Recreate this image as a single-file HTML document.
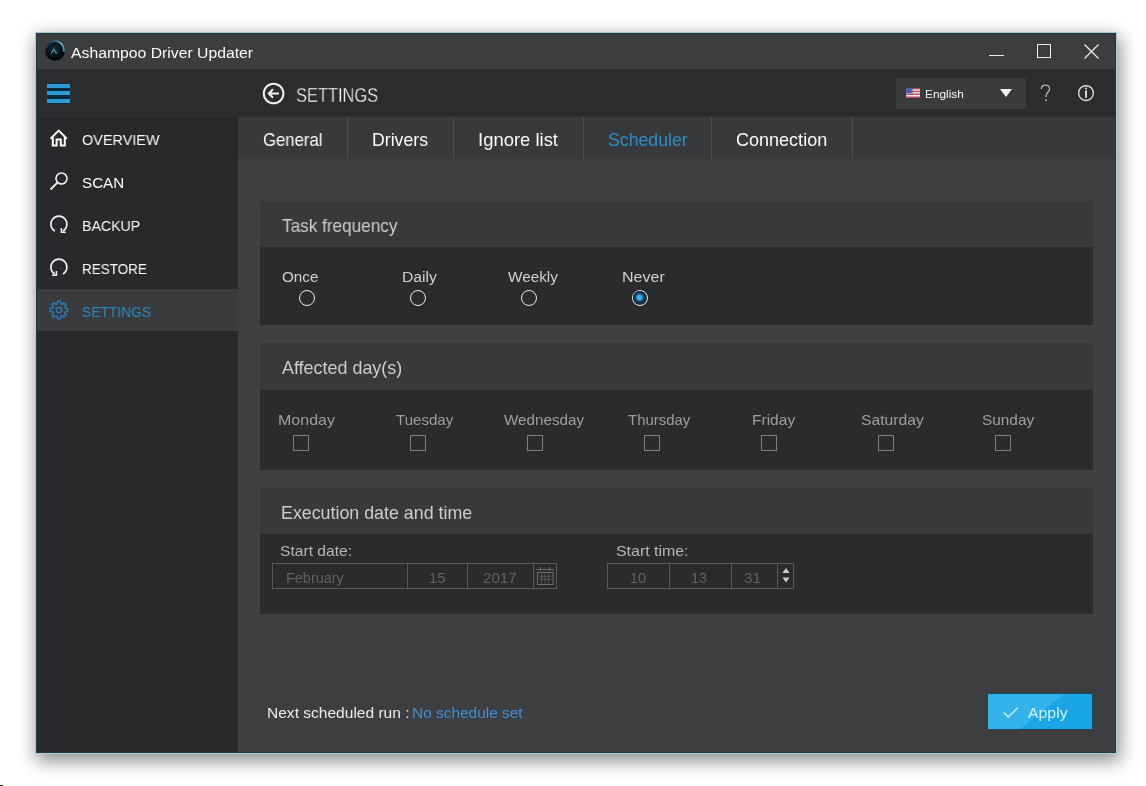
<!DOCTYPE html>
<html><head><meta charset="utf-8">
<style>
*{margin:0;padding:0;box-sizing:border-box}
html,body{width:1146px;height:786px;overflow:hidden;background:#fff;font-family:"Liberation Sans",sans-serif}
.abs{position:absolute}
.t{position:absolute;white-space:pre;line-height:1;transform-origin:0 0;will-change:transform}
#shadow{position:absolute;left:35px;top:32px;width:1082px;height:722px;box-shadow:2px 6px 17px 1px rgba(0,0,0,.45)}
#win{position:absolute;left:35px;top:32px;width:1082px;height:722px;background:#2b2c2e;border:1px solid #a8cdd4}
#title{position:absolute;left:37px;top:34px;width:1078px;height:35px;background:#3c3d3f}
#head{position:absolute;left:37px;top:69px;width:1078px;height:48px;background:#2b2c2e}
#side{position:absolute;left:37px;top:117px;width:201px;height:635px;background:#28292b}
#content{position:absolute;left:238px;top:117px;width:877px;height:635px;background:#3d3e40}
#tabs{position:absolute;left:238px;top:117px;width:877px;height:42px;background:#38393b}
.sep{position:absolute;top:117px;width:1px;height:42px;background:#4b4c4e}
.panel-h{position:absolute;left:260px;width:833px;background:#39393b}
.panel-b{position:absolute;left:260px;width:833px;background:#2a2b2d}
.radio{position:absolute;width:16px;height:16px;border:1.5px solid #ececec;border-radius:50%}
.chk{position:absolute;width:16px;height:16px;border:1px solid #7e7e7e}
.fld{position:absolute;height:26px;border:1px solid #58595b;top:563px}
.vs{position:absolute;top:563px;width:1px;height:26px;background:#58595b}
</style></head><body>
<div id="shadow"></div>
<div id="win"></div>
<div class="abs" style="left:36px;top:33px;width:1080px;height:720px;border:1px solid #1d3d45"></div>
<div id="title"></div>
<div id="head"></div>
<div id="side"></div>
<div id="content"></div>
<div id="tabs"></div>
<div class="abs" style="left:238px;top:113px;width:877px;height:1px;background:#242527"></div>
<div class="abs" style="left:0;top:785px;width:3px;height:1px;background:#3a4030"></div>

<!-- title bar -->
<svg class="abs" style="left:44px;top:40px" width="22" height="22" viewBox="0 0 22 22">
  <defs><radialGradient id="lg" cx="45%" cy="40%" r="65%"><stop offset="0" stop-color="#17303e"/><stop offset=".55" stop-color="#08141c"/><stop offset="1" stop-color="#000"/></radialGradient>
  <linearGradient id="arc" x1="0" y1="0.3" x2="1" y2="0.5"><stop offset="0" stop-color="#1c2c48"/><stop offset=".45" stop-color="#2f6f90"/><stop offset=".8" stop-color="#6ab8d0"/><stop offset="1" stop-color="#4a98b8"/></linearGradient></defs>
  <circle cx="11" cy="11" r="9.8" fill="url(#lg)"/>
  <path d="M2.8 7.8 A8.6 8.6 0 0 1 19.6 11.8" stroke="url(#arc)" stroke-width="1.8" fill="none"/>
  <path d="M7.2 13.6 L9.8 9.2 L11.6 12.4 L13.2 12.9" stroke="#5a8aa0" stroke-width="1.2" fill="none"/>
</svg>
<div class="abs" style="left:989px;top:55px;width:15px;height:1.3px;background:#ececec"></div>
<div class="abs" style="left:1037px;top:44px;width:14px;height:14px;border:1.3px solid #ececec"></div>
<svg class="abs" style="left:1084px;top:44px" width="15" height="15" viewBox="0 0 15 15"><path d="M0.5 0.5 L14.5 14.5 M14.5 0.5 L0.5 14.5" stroke="#ececec" stroke-width="1.3"/></svg>

<!-- header -->
<div class="abs" style="left:47px;top:83px;width:23px;height:21px;background:#0e2a40"></div>
<div class="abs" style="left:47px;top:84px;width:23px;height:4px;background:#2b9bd6"></div>
<div class="abs" style="left:47px;top:91px;width:23px;height:4px;background:#2b9bd6"></div>
<div class="abs" style="left:47px;top:99px;width:23px;height:4px;background:#2b9bd6"></div>
<svg class="abs" style="left:262px;top:82px" width="23" height="23" viewBox="0 0 23 23"><circle cx="11.6" cy="11.5" r="9.8" stroke="#f0f0f0" stroke-width="2" fill="none"/><path d="M17 11.5 H7 M11 7.3 L6.8 11.5 L11 15.7" stroke="#f0f0f0" stroke-width="2" fill="none"/></svg>
<div class="abs" style="left:896px;top:78px;width:130px;height:31px;background:#3a3b3d"></div>
<svg class="abs" style="left:906px;top:88px" width="14" height="10" viewBox="0 0 14 10"><rect width="14" height="10" fill="#e8e8f0"/><rect y="0" width="14" height="1.4" fill="#c04858"/><rect y="2.8" width="14" height="1.4" fill="#c04858"/><rect y="5.6" width="14" height="1.4" fill="#c04858"/><rect y="8.5" width="14" height="1.5" fill="#c04858"/><rect width="6.5" height="5.2" fill="#5060a8"/></svg>
<svg class="abs" style="left:1000px;top:89px" width="12" height="8" viewBox="0 0 12 8"><path d="M0 0 H12 L6 8Z" fill="#f4f4f4"/></svg>
<svg class="abs" style="left:1040px;top:84px" width="12" height="18" viewBox="0 0 12 18"><path d="M1.3 5 C1.3 2.6 3 1.2 5.4 1.2 C7.9 1.2 9.6 2.8 9.6 4.9 C9.6 8 6 8.6 6 12.2 V13.2" stroke="#b4b4b4" stroke-width="1.3" fill="none"/><circle cx="6" cy="16.2" r="0.95" fill="#b4b4b4"/></svg>
<svg class="abs" style="left:1077px;top:84px" width="18" height="18" viewBox="0 0 18 18"><circle cx="9" cy="9.1" r="7.4" stroke="#dcdcdc" stroke-width="1.4" fill="none"/><rect x="8.05" y="6.4" width="1.9" height="7.4" fill="#dcdcdc"/><circle cx="9" cy="4.5" r="1.05" fill="#dcdcdc"/></svg>

<!-- sidebar -->
<div class="abs" style="left:37px;top:289px;width:201px;height:42px;background:#3a3b3d"></div>
<svg class="abs" style="left:49px;top:129px" width="20" height="18" viewBox="0 0 20 18"><path d="M1.6 9.6 L9.7 1.6 L17.8 9.6 M3.8 7.6 V16.6 H7.6 V10.6 H11.8 V16.6 H15.8 V7.6" stroke="#fafafa" stroke-width="2" fill="none" stroke-linejoin="miter"/></svg>
<svg class="abs" style="left:49px;top:171px" width="20" height="20" viewBox="0 0 20 20"><circle cx="12.5" cy="7.5" r="5.5" stroke="#f0f0f0" stroke-width="1.6" fill="none"/><path d="M8.5 11.5 L1.5 18.5" stroke="#f0f0f0" stroke-width="1.8"/></svg>
<svg class="abs" style="left:49px;top:215px" width="20" height="20" viewBox="0 0 20 20"><path d="M5.9 16.1 A8 8 0 1 1 13.9 16.1" stroke="#f0f0f0" stroke-width="1.6" fill="none"/><path d="M12.4 13 V17.3 H16.8" stroke="#f0f0f0" stroke-width="1.6" fill="none"/></svg>
<svg class="abs" style="left:49px;top:258px" width="20" height="20" viewBox="0 0 20 20"><path d="M13.9 16.1 A8 8 0 1 0 5.9 16.1" stroke="#f0f0f0" stroke-width="1.6" fill="none"/><path d="M7.4 13 V17.3 H3" stroke="#f0f0f0" stroke-width="1.6" fill="none"/></svg>
<svg class="abs" style="left:49px;top:300px" width="20" height="20" viewBox="0 0 20 20"><g stroke="#267cb0" stroke-width="1.5" fill="none" stroke-linejoin="round"><circle cx="10" cy="10" r="2.7"/><path d="M16.26 8.27 L18.67 8.51 L18.67 11.49 L16.26 11.73 L15.66 13.20 L17.19 15.08 L15.08 17.19 L13.20 15.66 L11.73 16.26 L11.49 18.67 L8.51 18.67 L8.27 16.26 L6.80 15.66 L4.92 17.19 L2.81 15.08 L4.34 13.20 L3.74 11.73 L1.33 11.49 L1.33 8.51 L3.74 8.27 L4.34 6.80 L2.81 4.92 L4.92 2.81 L6.80 4.34 L8.27 3.74 L8.51 1.33 L11.49 1.33 L11.73 3.74 L13.20 4.34 L15.08 2.81 L17.19 4.92 L15.66 6.80Z"/></g></svg>

<!-- tabs -->
<div class="sep" style="left:347px"></div>
<div class="sep" style="left:453px"></div>
<div class="sep" style="left:583px"></div>
<div class="sep" style="left:711px"></div>
<div class="sep" style="left:852px"></div>

<!-- panel 1 -->
<div class="abs" style="left:257px;top:198px;width:839px;height:130px;background:#3f4042"></div>
<div class="panel-h" style="top:201px;height:46px"></div>
<div class="panel-b" style="top:247px;height:78px"></div>
<div class="radio" style="left:299px;top:290px"></div>
<div class="radio" style="left:410px;top:290px"></div>
<div class="radio" style="left:521px;top:290px"></div>
<div class="radio" style="left:632px;top:290px"><div class="abs" style="left:0.2px;top:0.2px;width:13px;height:13px;border-radius:50%;background:radial-gradient(circle closest-side,#3cc0f4 0%,#2aa6e2 38%,#124468 64%,#0b2233 100%)"></div></div>

<!-- panel 2 -->
<div class="abs" style="left:257px;top:340px;width:839px;height:133px;background:#3f4042"></div>
<div class="panel-h" style="top:343px;height:47px"></div>
<div class="panel-b" style="top:390px;height:80px"></div>
<div class="chk" style="left:293px;top:435px"></div>
<div class="chk" style="left:410px;top:435px"></div>
<div class="chk" style="left:527px;top:435px"></div>
<div class="chk" style="left:644px;top:435px"></div>
<div class="chk" style="left:761px;top:435px"></div>
<div class="chk" style="left:878px;top:435px"></div>
<div class="chk" style="left:995px;top:435px"></div>

<!-- panel 3 -->
<div class="abs" style="left:257px;top:485px;width:839px;height:132px;background:#3f4042"></div>
<div class="panel-h" style="top:488px;height:46px"></div>
<div class="panel-b" style="top:534px;height:80px"></div>
<div class="fld" style="left:272px;width:285px"></div>
<div class="vs" style="left:407px"></div>
<div class="vs" style="left:467px"></div>
<div class="vs" style="left:533px"></div>
<svg class="abs" style="left:536px;top:566px" width="19" height="20" viewBox="0 0 19 20"><g stroke="#6e6e6e" fill="none" stroke-width="1"><path d="M0.5 3.6 H18 M4.5 1 V4.2 M13.6 1 V4.2 M1 6.5 H17"/><rect x="1.5" y="6.5" width="15.5" height="12"/><path d="M5.5 8 V17.5 M9 8 V17.5 M12.5 8 V17.5 M3 10.3 H15.5 M3 13.3 H15.5" stroke="#5a5a5a" stroke-width="0.9"/></g></svg>
<div class="fld" style="left:607px;width:187px"></div>
<div class="vs" style="left:669px"></div>
<div class="vs" style="left:731px"></div>
<div class="vs" style="left:777px"></div>
<svg class="abs" style="left:781px;top:566px" width="10" height="20" viewBox="0 0 10 20"><path d="M1.5 7 L5 2 L8.5 7Z M1.5 11.5 L5 16.5 L8.5 11.5Z" fill="#cfcfcf"/></svg>

<!-- bottom -->
<div class="abs" style="left:987px;top:693px;width:106px;height:37px;background:#1b4a5e"></div>
<div class="abs" style="left:988px;top:694px;width:104px;height:35px;background:#1aa5e6;overflow:hidden"><svg class="abs" style="left:0;top:0" width="104" height="35"><path d="M0 0 H76 L32 35 H0Z" fill="#33b3ea"/></svg></div>
<svg class="abs" style="left:1003px;top:707px" width="16" height="11" viewBox="0 0 16 11"><path d="M0.8 5.5 L5.2 10 L14.8 0.8" stroke="#cdf0fc" stroke-width="1.3" fill="none"/></svg>

<div class="t" style="left:71.3px;top:44.8px;font-size:15.2px;transform:scaleX(1.037);color:#fafafa">Ashampoo Driver Updater</div>
<div class="t" style="left:295.8px;top:86.0px;font-size:19.8px;transform:scaleX(0.83);color:#ffffff;-webkit-text-stroke:0.35px #2b2c2e">SETTINGS</div>
<div class="t" style="left:81.7px;top:132.0px;font-size:15.2px;transform:scaleX(0.951);color:#fafafa">OVERVIEW</div>
<div class="t" style="left:81.7px;top:174.8px;font-size:15.2px;transform:scaleX(0.99);color:#fafafa">SCAN</div>
<div class="t" style="left:81.8px;top:217.8px;font-size:15.2px;transform:scaleX(0.933);color:#fafafa">BACKUP</div>
<div class="t" style="left:81.8px;top:260.8px;font-size:15.2px;transform:scaleX(0.887);color:#fafafa">RESTORE</div>
<div class="t" style="left:81.8px;top:303.8px;font-size:15.2px;transform:scaleX(0.911);color:#2886c0">SETTINGS</div>
<div class="t" style="left:263.0px;top:131.9px;font-size:17.7px;transform:scaleX(0.944);color:#fafafa">General</div>
<div class="t" style="left:372.0px;top:131.9px;font-size:17.7px;transform:scaleX(1.0);color:#fafafa">Drivers</div>
<div class="t" style="left:477.7px;top:131.9px;font-size:17.7px;transform:scaleX(1.043);color:#fafafa">Ignore list</div>
<div class="t" style="left:607.9px;top:131.9px;font-size:17.7px;transform:scaleX(0.994);color:#2b8fc6">Scheduler</div>
<div class="t" style="left:736.0px;top:131.9px;font-size:17.7px;transform:scaleX(1.019);color:#fafafa">Connection</div>
<div class="t" style="left:282.2px;top:217.8px;font-size:17.8px;transform:scaleX(0.965);color:#cdcdcd">Task frequency</div>
<div class="t" style="left:281.7px;top:269.0px;font-size:15.2px;transform:scaleX(1.003);color:#d0d0d0">Once</div>
<div class="t" style="left:401.7px;top:269.0px;font-size:15.2px;transform:scaleX(1.033);color:#d0d0d0">Daily</div>
<div class="t" style="left:507.7px;top:269.0px;font-size:15.2px;transform:scaleX(1.006);color:#d0d0d0">Weekly</div>
<div class="t" style="left:622.2px;top:269.0px;font-size:15.2px;transform:scaleX(1.056);color:#d0d0d0">Never</div>
<div class="t" style="left:282.0px;top:359.8px;font-size:17.8px;transform:scaleX(1.008);color:#cdcdcd">Affected day(s)</div>
<div class="t" style="left:277.7px;top:412.7px;font-size:14.8px;transform:scaleX(1.083);color:#9e9e9e">Monday</div>
<div class="t" style="left:396.2px;top:412.7px;font-size:14.8px;transform:scaleX(1.018);color:#9e9e9e">Tuesday</div>
<div class="t" style="left:503.7px;top:412.7px;font-size:14.8px;transform:scaleX(1.028);color:#9e9e9e">Wednesday</div>
<div class="t" style="left:628.0px;top:412.7px;font-size:14.8px;transform:scaleX(1.01);color:#9e9e9e">Thursday</div>
<div class="t" style="left:752.4px;top:412.7px;font-size:14.8px;transform:scaleX(1.05);color:#9e9e9e">Friday</div>
<div class="t" style="left:861.4px;top:412.7px;font-size:14.8px;transform:scaleX(1.06);color:#9e9e9e">Saturday</div>
<div class="t" style="left:981.6px;top:412.7px;font-size:14.8px;transform:scaleX(1.039);color:#9e9e9e">Sunday</div>
<div class="t" style="left:280.7px;top:504.9px;font-size:17.8px;transform:scaleX(1.002);color:#cdcdcd">Execution date and time</div>
<div class="t" style="left:280.3px;top:544.0px;font-size:14.5px;transform:scaleX(1.077);color:#b6b6b6">Start date:</div>
<div class="t" style="left:615.6px;top:544.0px;font-size:14.5px;transform:scaleX(1.098);color:#b6b6b6">Start time:</div>
<div class="t" style="left:285.5px;top:571.0px;font-size:14.4px;transform:scaleX(1.004);color:#616161">February</div>
<div class="t" style="left:429.1px;top:571.0px;font-size:14.4px;transform:scaleX(1.029);color:#616161">15</div>
<div class="t" style="left:483.2px;top:571.0px;font-size:14.4px;transform:scaleX(1.05);color:#616161">2017</div>
<div class="t" style="left:629.6px;top:571.0px;font-size:14.4px;transform:scaleX(0.993);color:#616161">10</div>
<div class="t" style="left:691.3px;top:571.0px;font-size:14.4px;transform:scaleX(1.0);color:#616161">13</div>
<div class="t" style="left:743.8px;top:571.0px;font-size:14.4px;transform:scaleX(1.057);color:#616161">31</div>
<div class="t" style="left:267.0px;top:705.2px;font-size:15.0px;transform:scaleX(1.036);color:#ececec">Next scheduled run :</div>
<div class="t" style="left:412.4px;top:705.2px;font-size:15.0px;transform:scaleX(1.028);color:#3d90d6">No schedule set</div>
<div class="t" style="left:1027.6px;top:705.8px;font-size:14.5px;transform:scaleX(1.092);color:#d4f3ff">Apply</div>
<div class="t" style="left:924.7px;top:88.8px;font-size:11.8px;transform:scaleX(1.003);color:#fafafa">English</div>
</body></html>
